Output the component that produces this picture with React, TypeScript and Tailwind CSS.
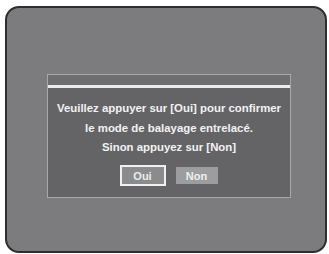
import React from 'react';

const App = () => {
  return (
    <div className="w-[329px] h-[254px] bg-white pt-[6px] pl-[5px]" style={{ fontFamily: '"Liberation Sans", Arial, sans-serif' }}>
      <div className="w-[322px] h-[247px] rounded-[14px] border-2 border-[#2e2e30] bg-[#7c7c7f] pt-[66px] pl-[40px]">
        <div className="w-[244px] h-[124px] border border-[#a8a8ab] bg-[#646467] flex flex-col">
          <div className="h-[10px] bg-[#6e6e71]" />
          <div className="h-[3px] bg-[#ececec]" />
          <div className="flex flex-col items-center pt-[11px] text-[11.4px] font-bold leading-[19.5px] text-[#f2f2f2]">
            <p>Veuillez appuyer sur [Oui] pour confirmer</p>
            <p>le mode de balayage entrelacé.</p>
            <p>Sinon appuyez sur [Non]</p>
            <div className="flex items-center gap-[10px] mt-[7px] ml-[-1px]">
              <button className="w-[46px] h-[21px] border-2 border-[#f0f0f0] bg-[#8b8b8e] text-[11px] font-bold text-[#ededed]">
                Oui
              </button>
              <button className="w-[42px] h-[17px] bg-[#9d9da0] text-[11px] font-bold text-[#f0f0f0]">
                Non
              </button>
            </div>
          </div>
        </div>
      </div>
    </div>
  );
};

export default App;
